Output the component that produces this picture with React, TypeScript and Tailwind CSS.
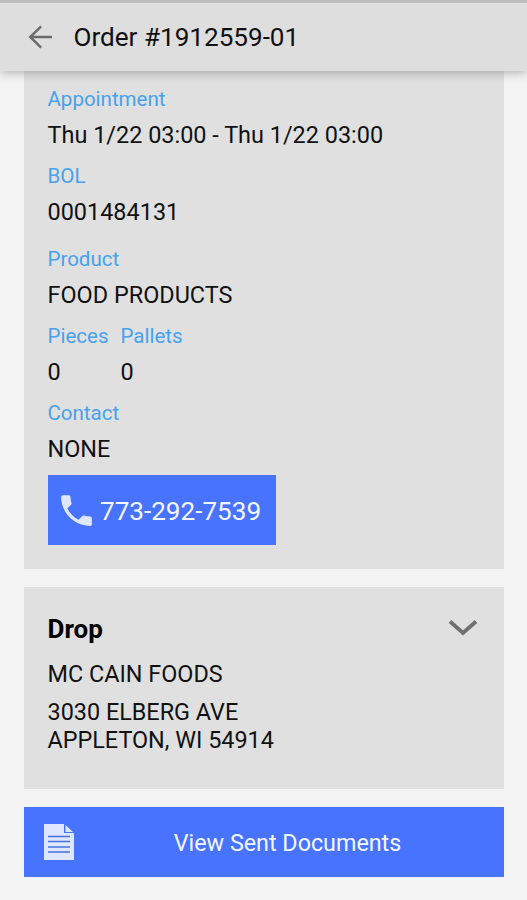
import type { ReactNode } from 'react'

function Field({ label, children }: { label: string; children: ReactNode }) {
  return (
    <div>
      <div className="pt-px text-[20.5px] leading-[31px] text-[#46a2ee]">{label}</div>
      <div className="text-[23.45px] leading-10">{children}</div>
    </div>
  )
}

function BackIcon() {
  return (
    <svg width="36" height="36" viewBox="0 0 24 24" fill="#6b6b6b">
      <path d="M20 11.15H7.6l5.7-5.7L12.200 4.300l-7.900 7.700 7.900 7.700 1.100-1.150L7.600 12.850H20z" />
    </svg>
  )
}

function PhoneIcon() {
  return (
    <svg width="41" height="41" viewBox="0 0 24 24" fill="#dfe7ff">
      <path d="M6.62 10.79c1.44 2.83 3.76 5.14 6.59 6.59l2.2-2.2c.27-.27.67-.36 1.02-.24 1.12.37 2.33.57 3.57.57.55 0 1 .45 1 1V20c0 .55-.45 1-1 1-9.39 0-17-7.61-17-17 0-.55.45-1 1-1h3.5c.55 0 1 .45 1 1 0 1.25.2 2.45.57 3.57.11.35.03.74-.25 1.02l-2.2 2.2z" />
    </svg>
  )
}

function DocumentIcon() {
  return (
    <svg width="30" height="36" viewBox="0 0 30 36">
      <path d="M0 0h20v9h10v27H0z" fill="#dfe7ff" />
      <path d="M21.5 1l7.5 7h-7.5z" fill="#dfe7ff" />
      <path d="M4 12.5h22M4 17.5h22M4 23h22M4 28h22" stroke="#4872e0" strokeWidth="1.5" />
    </svg>
  )
}

export default function App() {
  return (
    <div className="flex h-[900px] flex-col bg-[#f3f3f3] font-[Roboto,sans-serif] text-[#111]">
      <header className="relative z-10 flex h-[71px] shrink-0 items-center gap-[15.5px] border-t-[3px] border-[#bdbdbd] bg-[#dedede] pl-[22px] shadow-[0_1px_10px_rgba(0,0,0,0.3)]">
        <BackIcon />
        <h1 className="text-[26.1px] leading-9">Order #1912559-01</h1>
      </header>

      <main className="flex flex-col gap-[18px] px-6 pr-[23px]">
        <section className="flex h-[498px] flex-col items-start gap-[5px] bg-[#e0e0e0] px-[23.5px] pt-3">
          <Field label="Appointment">Thu 1/22 03:00 - Thu 1/22 03:00</Field>
          <Field label="BOL">0001484131</Field>
          <div className="mt-1.5">
            <Field label="Product">FOOD PRODUCTS</Field>
          </div>
          <div className="flex gap-3">
            <Field label="Pieces">0</Field>
            <Field label="Pallets">0</Field>
          </div>
          <Field label="Contact">NONE</Field>
          <button className="mt-px flex h-[70px] w-[228px] items-center gap-[3.5px] bg-[#4773ff] pl-2 text-[26.1px] text-[#f4f7ff]">
            <PhoneIcon />
            <span className="pt-1">773-292-7539</span>
          </button>
        </section>

        <section className="h-[202px] bg-[#e0e0e0] px-[23.5px] pt-6">
          <div className="flex items-center justify-between">
            <h2 className="text-[26px] leading-9 font-bold text-black">Drop</h2>
            <svg width="30" height="18" viewBox="0 0 30 18" className="mr-[2.5px] mb-[3px]">
              <path d="M2 2.5l13 11.5 13-11.5" fill="none" stroke="#707070" strokeWidth="3.8" />
            </svg>
          </div>
          <p className="mt-[13px] text-[23.4px] leading-7">MC CAIN FOODS</p>
          <p className="mt-2.5 text-[23.4px] leading-7">
            3030 ELBERG AVE
            <br />
            APPLETON, WI 54914
          </p>
        </section>

        <button className="flex h-[70px] items-center bg-[#4773ff] pl-5 text-[23.3px] text-[#f4f7ff]">
          <DocumentIcon />
          <span className="flex-1 pt-[3px] pr-[3px] text-center">View Sent Documents</span>
        </button>
      </main>
    </div>
  )
}
